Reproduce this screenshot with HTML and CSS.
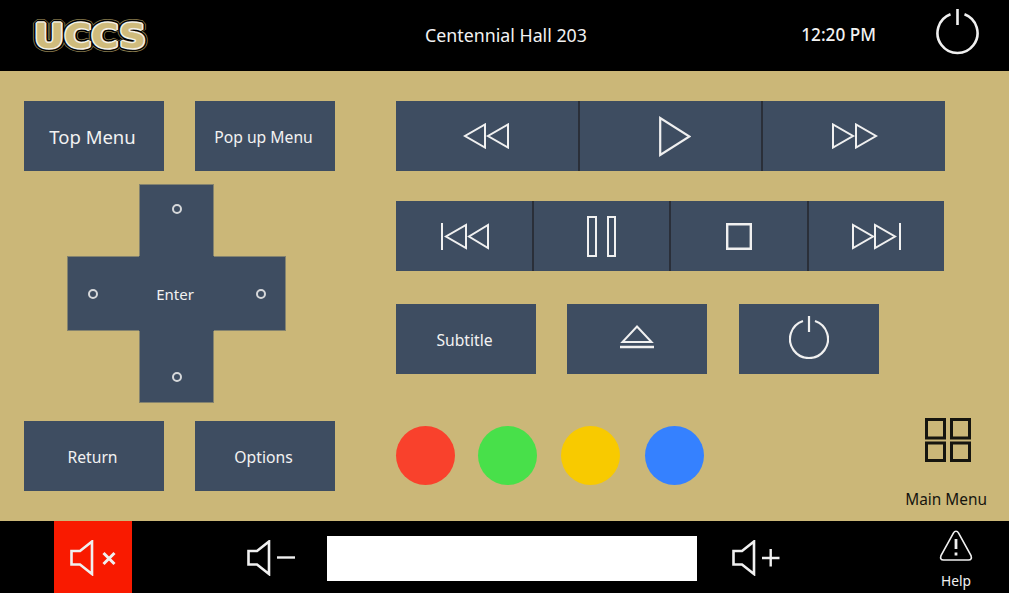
FILE: index.html
```html
<!DOCTYPE html>
<html lang="en">
<head>
  <meta charset="UTF-8">
  <title>Centennial Hall 203</title>
  <link rel="stylesheet" href="styles.css">
</head>
<body>

<!-- HEADER -->
<div class="topbar">
  <svg class="logo" width="130" height="44" viewBox="0 0 130 44">
    <text x="65" y="33.5" text-anchor="middle" textLength="112" lengthAdjust="spacingAndGlyphs" class="logo-outer">UCCS</text>
    <text x="65" y="33.5" text-anchor="middle" textLength="112" lengthAdjust="spacingAndGlyphs" class="logo-black">UCCS</text>
    <text x="65" y="33.5" text-anchor="middle" textLength="112" lengthAdjust="spacingAndGlyphs" class="logo-white">UCCS</text>
    <text x="65" y="33.5" text-anchor="middle" textLength="112" lengthAdjust="spacingAndGlyphs" class="logo-gold">UCCS</text>
  </svg>
  <div class="room">Centennial Hall 203</div>
  <div class="clock">12:20 PM</div>
  <svg class="top-power" width="44" height="47" viewBox="0 0 44 47">
    <path d="M14.5 5.3 A20 20 0 1 0 28.5 5.3" class="line" stroke-width="2.6"/>
    <path d="M21.5 0 V16" class="line" stroke-width="2.6"/>
  </svg>
</div>

<!-- MAIN PANEL -->
<div class="panel">
  <div class="left-col">
    <div class="btn-row">
      <button class="btn btn-text btn-large">Top Menu</button>
      <button class="btn btn-text">Pop up Menu</button>
    </div>

    <div class="dpad">
      <button class="pad pad-up"><span class="dot"></span></button>
      <button class="pad pad-left"><span class="dot"></span></button>
      <button class="pad pad-enter">Enter</button>
      <button class="pad pad-right"><span class="dot"></span></button>
      <button class="pad pad-down"><span class="dot"></span></button>
    </div>

    <div class="btn-row">
      <button class="btn btn-text">Return</button>
      <button class="btn btn-text">Options</button>
    </div>
  </div>

  <div class="right-col">
    <div class="segments segments-3">
      <button class="seg">
        <svg class="icon-rew" width="46" height="26" viewBox="0 0 46 26"><path d="M22 1.5 V24.5 L2 13 Z M45 1.5 V24.5 L25 13 Z" class="line" stroke-width="2"/></svg>
      </button>
      <button class="seg">
        <svg class="icon-play" width="32" height="41" viewBox="0 0 32 41"><path d="M1.2 2 V39 L30.5 20.5 Z" class="line" stroke-width="2.2"/></svg>
      </button>
      <button class="seg">
        <svg class="icon-ff" width="46" height="26" viewBox="0 0 46 26"><path d="M1 1.5 V24.5 L21 13 Z M24 1.5 V24.5 L44 13 Z" class="line" stroke-width="2"/></svg>
      </button>
    </div>

    <div class="segments segments-4">
      <button class="seg">
        <svg class="icon-prev" width="48" height="27" viewBox="0 0 48 27"><path d="M1 0 V27 M25 2 V25 L5 13.5 Z M47 2 V25 L28 13.5 Z" class="line" stroke-width="2"/></svg>
      </button>
      <button class="seg">
        <svg class="icon-pause" width="29" height="41" viewBox="0 0 29 41"><path d="M1 1 H9 V40 H1 Z M21 1 H28 V40 H21 Z" class="line" stroke-width="2"/></svg>
      </button>
      <button class="seg">
        <svg width="26" height="27" viewBox="0 0 26 27"><path d="M1.2 1.2 H24.8 V25.8 H1.2 Z" class="line" stroke-width="2.4"/></svg>
      </button>
      <button class="seg">
        <svg width="49" height="27" viewBox="0 0 49 27"><path d="M1 2 V25 L21 13.5 Z M23 2 V25 L43 13.5 Z M48 0 V27" class="line" stroke-width="2"/></svg>
      </button>
    </div>

    <div class="btn-row btn-row-3">
      <button class="btn btn-text">Subtitle</button>
      <button class="btn">
        <svg class="icon-eject" width="34" height="24" viewBox="0 0 34 24"><path d="M17 1.5 L31.5 17 H2.5 Z" class="line" stroke-width="2"/><path d="M0 22 H34" class="line" stroke-width="2.4"/></svg>
      </button>
      <button class="btn">
        <svg class="icon-power" width="40" height="43" viewBox="0 0 40 43"><path d="M14 5 A19 19 0 1 0 26 5" class="line" stroke-width="2.2"/><path d="M20 0 V16" class="line" stroke-width="2.2"/></svg>
      </button>
    </div>

    <div class="color-row">
      <span class="circle circle-red"></span>
      <span class="circle circle-green"></span>
      <span class="circle circle-yellow"></span>
      <span class="circle circle-blue"></span>
      <div class="main-menu">
        <svg class="icon-grid" width="46" height="44" viewBox="0 0 46 44">
          <path d="M1.5 1.5 H19.5 V20 H1.5 Z M26.5 1.5 H44.5 V20 H26.5 Z M1.5 25 H19.5 V42.5 H1.5 Z M26.5 25 H44.5 V42.5 H26.5 Z" class="line line-dark" stroke-width="3"/>
        </svg>
        <span class="main-menu-label">Main Menu</span>
      </div>
    </div>
  </div>
</div>

<!-- FOOTER -->
<div class="bottombar">
  <button class="vol vol-mute">
    <svg width="46" height="36" viewBox="0 0 46 36">
      <path d="M1.5 11 H10 L22 1.5 V34 L10 24.5 H1.5 Z" class="line" stroke-width="2.6"/>
      <path d="M33.5 13 L44.5 24 M44.5 13 L33.5 24" class="line" stroke-width="3"/>
    </svg>
  </button>
  <button class="vol vol-down">
    <svg width="48" height="36" viewBox="0 0 48 36">
      <path d="M1.5 11 H10 L22 1.5 V34 L10 24.5 H1.5 Z" class="line" stroke-width="2.6"/>
      <path d="M30 17.5 H48" class="line" stroke-width="2.4"/>
    </svg>
  </button>
  <div class="vol-bar"></div>
  <button class="vol vol-up">
    <svg width="48" height="36" viewBox="0 0 48 36">
      <path d="M1.5 11 H10 L22 1.5 V34 L10 24.5 H1.5 Z" class="line" stroke-width="2.6"/>
      <path d="M30 18 H47.5 M38.7 9 V26.5" class="line" stroke-width="2.4"/>
    </svg>
  </button>
  <div class="help">
    <svg width="34" height="32" viewBox="0 0 34 32">
      <path d="M17 1.2 Q18.6 1.2 19.6 3.1 L32 25.5 Q33.4 30 29.5 30 H4.5 Q0.6 30 2 25.5 L14.4 3.1 Q15.4 1.2 17 1.2 Z" class="line" stroke-width="1.6"/>
      <path d="M17 9 V19" class="line" stroke-width="2.8"/>
      <path d="M17 22.5 V25.5" class="line" stroke-width="2.8"/>
    </svg>
    <span class="help-label">Help</span>
  </div>
</div>

</body>
</html>
```

FILE: styles.css
```css
* {
  margin: 0;
  padding: 0;
  box-sizing: border-box;
}

body {
  width: 1009px;
  height: 593px;
  overflow: hidden;
  background-color: #000;
  font-family: "Noto Sans", sans-serif;
  color: #f2f2f2;
}

button {
  border: none;
  font-family: inherit;
  color: inherit;
}

svg {
  display: block;
}

.line {
  fill: none;
  stroke: #f0f0f0;
}

.line-dark {
  stroke: #15150f;
}

/* header */
.topbar {
  display: flex;
  align-items: center;
  height: 71px;
  padding-left: 25px;
  padding-right: 29px;
}

.logo text {
  font-family: "DejaVu Sans", sans-serif;
  font-weight: bold;
  font-size: 34px;
  stroke-linejoin: bevel;
}

.logo-outer {
  fill: #000;
  stroke: #8b7d4e;
  stroke-width: 8px;
}

.logo-black {
  fill: #000;
  stroke: #000;
  stroke-width: 6.5px;
}

.logo-white {
  fill: #fff;
  stroke: #f4f1e6;
  stroke-width: 3.5px;
}

.logo-gold {
  fill: #cfbb7c;
  stroke: #cfbb7c;
  stroke-width: 0.4px;
}

.room {
  margin-left: 270px;
  margin-bottom: 2px;
  font-size: 17.8px;
}

.clock {
  margin-left: auto;
  margin-bottom: 2px;
  font-size: 17.2px;
  font-weight: 500;
}

.top-power {
  margin-left: 60px;
  margin-bottom: 6px;
}

/* panel */
.panel {
  display: flex;
  gap: 61px;
  height: 450px;
  padding: 30px 22px 0 24px;
  background-color: #cbb778;
}

.left-col {
  width: 311px;
}

.btn-row {
  display: flex;
  gap: 31px;
}

.btn {
  display: flex;
  align-items: center;
  justify-content: center;
  width: 140px;
  height: 70px;
  background-color: #3e4d61;
  font-size: 15.7px;
}

.btn-text {
  padding: 2px 3px 0 0;
}

.btn-large {
  padding-top: 0;
  font-size: 18.5px;
}

/* d-pad */
.dpad {
  display: grid;
  grid-template-columns: 72px 75px 72px;
  grid-template-rows: 72px 75px 72px;
  width: 219px;
  margin: 13px 0 18px 43px;
}

.pad {
  display: flex;
  align-items: center;
  justify-content: center;
  background-color: #3e4d61;
  border: 0 solid #84836f;
  font-size: 15px;
}

.pad-up {
  grid-column: 2;
  grid-row: 1;
  border-width: 1px 1px 0 1px;
  padding-bottom: 23px;
}

.pad-left {
  grid-column: 1;
  grid-row: 2;
  border-width: 1px 0 1px 1px;
  padding-right: 22px;
}

.pad-enter {
  grid-column: 2;
  grid-row: 2;
  padding-right: 3px;
}

.pad-right {
  grid-column: 3;
  grid-row: 2;
  border-width: 1px 1px 1px 0;
  padding-left: 22px;
}

.pad-down {
  grid-column: 2;
  grid-row: 3;
  border-width: 0 1px 1px 1px;
  padding-top: 21px;
}

.dot {
  width: 10px;
  height: 10px;
  border: 2px solid #d6d8da;
  border-radius: 50%;
}

/* transport */
.right-col {
  flex: 1;
}

.segments {
  display: flex;
  height: 70px;
}

.segments-3 {
  width: 549px;
}

.segments-4 {
  width: 548px;
  margin-top: 30px;
}

.seg {
  flex: 1;
  display: flex;
  align-items: center;
  justify-content: center;
  background-color: #3e4d61;
}

.seg + .seg {
  border-left: 2px solid #2a2f39;
}

.icon-rew {
  margin-right: 2px;
}

.icon-play {
  margin-left: 9px;
}

.icon-ff,
.icon-prev {
  margin-left: 2px;
}

.icon-pause {
  margin-left: 1px;
}

.icon-eject {
  margin-bottom: 4px;
}

.icon-power {
  margin-bottom: 3px;
}

.btn-row-3 {
  gap: 31.4px;
  margin-top: 33px;
}

/* colour buttons */
.color-row {
  display: flex;
  gap: 23.3px;
  margin-top: 44px;
}

.circle {
  width: 59px;
  height: 59px;
  margin-top: 8px;
  border-radius: 50%;
}

.circle-red {
  background-color: #f9412c;
}

.circle-green {
  background-color: #48e04a;
}

.circle-yellow {
  background-color: #f8ca00;
}

.circle-blue {
  margin-left: 2px;
  background-color: #3581ff;
}

.main-menu {
  display: flex;
  flex-direction: column;
  align-items: center;
  gap: 28px;
  margin-left: auto;
}

.icon-grid {
  margin-left: 3px;
}

.main-menu-label {
  font-size: 15.4px;
  line-height: 20px;
  color: #15150f;
}

/* footer */
.bottombar {
  display: flex;
  align-items: center;
  height: 72px;
  padding-left: 54px;
}

.vol {
  display: flex;
  align-items: center;
  justify-content: center;
  height: 72px;
  padding-top: 2px;
  background: none;
}

.vol-mute {
  width: 78px;
  background-color: #f91a00;
}

.vol-down {
  width: 48px;
  margin-left: 115px;
}

.vol-bar {
  width: 370px;
  height: 45px;
  margin-top: 2px;
  margin-left: 32px;
  background-color: #fff;
}

.vol-up {
  width: 48px;
  margin-left: 35px;
}

.help {
  display: flex;
  flex-direction: column;
  align-items: center;
  align-self: flex-start;
  width: 60px;
  margin-left: auto;
  margin-right: 23px;
  padding-top: 8.5px;
}

.help-label {
  margin-top: 9px;
  font-size: 13.8px;
  line-height: 20px;
}
```
